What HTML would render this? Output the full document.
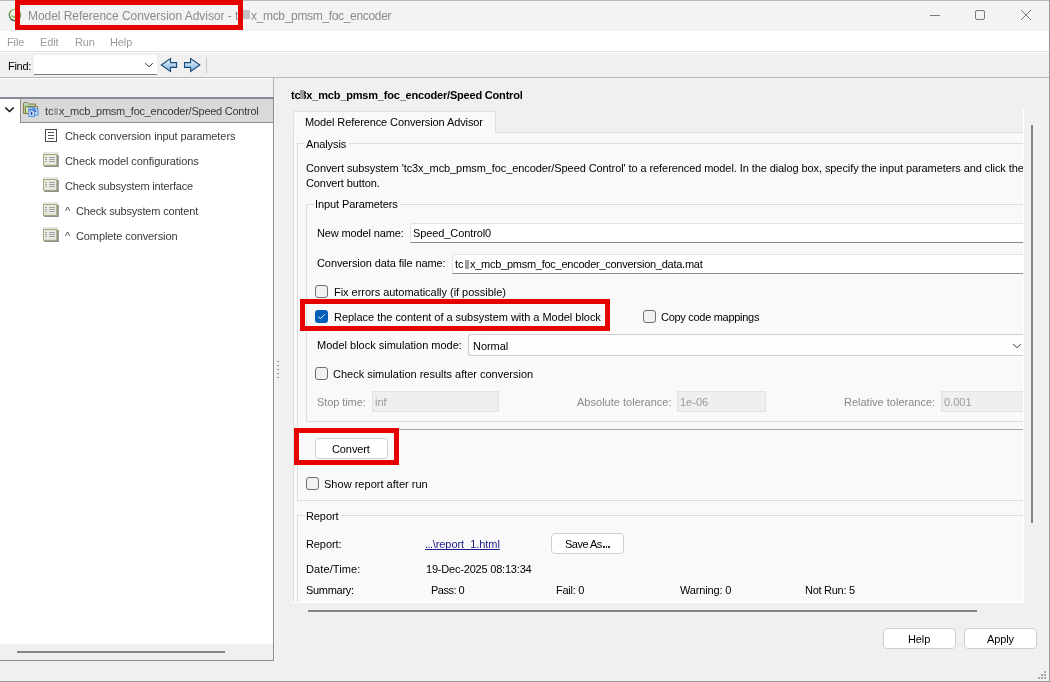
<!DOCTYPE html>
<html><head><meta charset="utf-8"><style>
html,body{margin:0;padding:0;}
body{width:1050px;height:682px;position:relative;overflow:hidden;background:#f0f0f0;font-family:"Liberation Sans",sans-serif;}
.t{position:absolute;white-space:pre;will-change:transform;font-family:"Liberation Sans",sans-serif;}
.r{position:absolute;}
</style></head><body>
<div class="r" style="left:0px;top:0px;width:1050px;height:31px;background:#f3f3f3;"></div>
<div class="r" style="left:0px;top:0px;width:1050px;height:1px;background:#b9b9b9;"></div>
<svg class="r" style="left:8px;top:8px" width="14" height="14" viewBox="0 0 14 14"><defs><linearGradient id="gr" x1="0.7" y1="0" x2="0.2" y2="1"><stop offset="0" stop-color="#9ccf6a"/><stop offset="1" stop-color="#355e30"/></linearGradient></defs><circle cx="7" cy="7" r="5.7" fill="#f6f8f3" stroke="url(#gr)" stroke-width="1.3"/><path d="M3.6 7.6 L6.8 9.6" stroke="#76bf45" stroke-width="1.8"/></svg>
<div class="t" style="left:28px;top:10.00px;font-size:12px;line-height:12px;color:#8b8b8b;font-weight:normal;letter-spacing:-0.05px;">Model Reference Conversion Advisor - t</div>
<div class="t" style="left:250.5px;top:10.00px;font-size:12px;line-height:12px;color:#8b8b8b;font-weight:normal;letter-spacing:-0.33px;">x_mcb_pmsm_foc_encoder</div>
<div class="r" style="left:243px;top:10px;width:7px;height:9px;background:#c4c4c4;"></div>
<svg class="r" style="left:925px;top:5px" width="115" height="22" viewBox="0 0 115 22"><path d="M5 10.5 H15" stroke="#7a7a7a" stroke-width="1"/><rect x="50.5" y="5.5" width="9" height="9" rx="1.5" fill="none" stroke="#7a7a7a" stroke-width="1"/><path d="M96 5 L106 15 M106 5 L96 15" stroke="#7a7a7a" stroke-width="1"/></svg>
<div class="r" style="left:0px;top:31px;width:1050px;height:21px;background:#ffffff;"></div>
<div class="r" style="left:0px;top:51px;width:1050px;height:1px;background:#e6e6e6;"></div>
<div class="t" style="left:7px;top:37.00px;font-size:11px;line-height:11px;color:#9b9b9b;font-weight:normal;letter-spacing:-0.1px;">File</div>
<div class="t" style="left:40px;top:37.00px;font-size:11px;line-height:11px;color:#9b9b9b;font-weight:normal;letter-spacing:-0.1px;">Edit</div>
<div class="t" style="left:75px;top:37.00px;font-size:11px;line-height:11px;color:#9b9b9b;font-weight:normal;letter-spacing:-0.1px;">Run</div>
<div class="t" style="left:110px;top:37.00px;font-size:11px;line-height:11px;color:#9b9b9b;font-weight:normal;letter-spacing:-0.1px;">Help</div>
<div class="r" style="left:0px;top:52px;width:1050px;height:26px;background:#f0f0f0;"></div>
<div class="r" style="left:0px;top:52px;width:1050px;height:1px;background:#ffffff;"></div>
<div class="r" style="left:0px;top:77px;width:1050px;height:1px;background:#b8b8b8;"></div>
<div class="t" style="left:8px;top:61.00px;font-size:11px;line-height:11px;color:#000;font-weight:normal;letter-spacing:-0.3px;">Find:</div>
<div class="r" style="left:34px;top:55px;width:123px;height:20px;background:#fff;border-bottom:1px solid #7d7d7d;border-radius:2px 2px 0 0;box-sizing:border-box;"></div>
<svg class="r" style="left:144px;top:60px" width="11" height="8" viewBox="0 0 11 8"><path d="M1.2 3.3 L5 6.6 L8.8 3.3" fill="none" stroke="#3e3e3e" stroke-width="1"/></svg>
<svg class="r" style="left:160px;top:57px" width="42" height="17" viewBox="0 0 42 17"><defs><linearGradient id="ga" x1="0" y1="0" x2="0" y2="1"><stop offset="0" stop-color="#eef7fd"/><stop offset="1" stop-color="#7ab0de"/></linearGradient></defs><path d="M1.3 8 L10.5 1.5 V5.6 H16.6 V10.4 H10.5 V14.5 Z" fill="url(#ga)" stroke="#1b4a78" stroke-width="1.1" stroke-linejoin="miter"/><path d="M39.8 8 L30.6 1.5 V5.6 H24.5 V10.4 H30.6 V14.5 Z" fill="url(#ga)" stroke="#1b4a78" stroke-width="1.1" stroke-linejoin="miter"/></svg>
<div class="r" style="left:206px;top:57px;width:1px;height:16px;background:#c8c8c8;"></div>
<div class="r" style="left:0px;top:78px;width:1050px;height:604px;background:#f0f0f0;"></div>
<div class="r" style="left:0px;top:78px;width:273px;height:1px;background:#ffffff;"></div>
<div class="r" style="left:273px;top:78px;width:1px;height:19px;background:#b2b2b2;"></div>
<div class="r" style="left:0px;top:97px;width:274px;height:564px;background:#fff;border-top:2px solid #868c95;border-right:1px solid #868c95;border-bottom:1px solid #868c95;box-sizing:border-box;"></div>
<div class="r" style="left:274px;top:97px;width:1px;height:564px;background:#f8f8f8;"></div>
<div class="r" style="left:277px;top:360.6px;width:2px;height:1.3px;background:#969696;"></div>
<div class="r" style="left:277px;top:364.6px;width:2px;height:1.3px;background:#969696;"></div>
<div class="r" style="left:277px;top:368.6px;width:2px;height:1.3px;background:#969696;"></div>
<div class="r" style="left:277px;top:372.6px;width:2px;height:1.3px;background:#969696;"></div>
<div class="r" style="left:277px;top:376.6px;width:2px;height:1.3px;background:#969696;"></div>
<div class="r" style="left:0px;top:644px;width:273px;height:16px;background:#f0f0f0;"></div>
<div class="r" style="left:17px;top:651px;width:208px;height:2px;background:#858585;"></div>
<div class="r" style="left:20px;top:99px;width:253px;height:24px;background:#d9d9d9;border-left:1px solid #8f8f8f;border-bottom:1px solid #8f8f8f;box-sizing:border-box;"></div>
<svg class="r" style="left:3px;top:104px" width="13" height="10" viewBox="0 0 13 10"><path d="M2.3 3.5 L6.5 7.5 L10.7 3.5" fill="none" stroke="#111" stroke-width="1.6"/></svg>
<svg class="r" style="left:20px;top:99px" width="22" height="22" viewBox="0 0 22 22"><path d="M3.5 4.5 Q3.5 3.5 4.5 3.5 H7.5 L8.5 5 H15.5 V14.5 H3.5 Z" fill="#b3d29a" stroke="#877c45" stroke-width="1"/><rect x="4.3" y="4.3" width="3.5" height="1.2" fill="#bfe0f6"/><path d="M5.5 7.5 H17.5 V14.5 H5.5 Z" fill="#cde4b2" stroke="#877c45" stroke-width="1"/><rect x="6.2" y="8.2" width="10.6" height="1.1" fill="#bfe0f6"/><rect x="12" y="9.5" width="6.5" height="7" fill="#5a96e2"/><rect x="13" y="10.5" width="4.3" height="4.8" fill="#cfe5fb"/><rect x="8.3" y="8.3" width="6.8" height="9.5" fill="#4a88de"/><rect x="9.3" y="9.3" width="3" height="2.2" fill="#cfe5fb"/><rect x="9.3" y="12.3" width="4.8" height="4.5" fill="#cfe5fb"/><rect x="10" y="10" width="1.3" height="1.2" fill="#0b2590"/><rect x="10.9" y="13.2" width="1.4" height="2.6" fill="#0b2590"/><rect x="14.8" y="11.6" width="1.3" height="1.3" fill="#0b2590"/></svg>
<div class="t" style="left:45px;top:106.00px;font-size:11px;line-height:11px;color:#3a3a3a;font-weight:normal;letter-spacing:-0.1px;">tc</div>
<div class="t" style="left:59.3px;top:106.00px;font-size:11px;line-height:11px;color:#3a3a3a;font-weight:normal;letter-spacing:-0.25px;">x_mcb_pmsm_foc_encoder/Speed Control</div>
<div class="r" style="left:54px;top:108px;width:4px;height:7px;background:#a9a9a9;"></div>
<div class="r" style="left:45px;top:129px;width:12px;height:13px;background:#fff;border:1px solid #4a4a4a;box-sizing:border-box;"></div>
<div class="r" style="left:48px;top:132px;width:6px;height:1.2px;background:#555;"></div>
<div class="r" style="left:48px;top:135px;width:6px;height:1.2px;background:#555;"></div>
<div class="r" style="left:48px;top:138px;width:6px;height:1.2px;background:#555;"></div>
<div class="t" style="left:65px;top:131.00px;font-size:11px;line-height:11px;color:#3a3a3a;font-weight:normal;letter-spacing:-0.08px;">Check conversion input parameters</div>
<svg class="r" style="left:43px;top:152px" width="17" height="16" viewBox="0 0 17 16"><rect x="0" y="0.2" width="15.8" height="1.6" fill="#e2e2e2"/><rect x="1.3" y="3" width="14.5" height="12" fill="#8c8c8c"/><rect x="0.5" y="2.5" width="13.3" height="10.8" fill="#eaeae2" stroke="#a3aa7a" stroke-width="1"/><path d="M2.1 5.5 H4 M2.1 7.5 H4 M2.1 9.5 H4 M6.1 5.5 H11.8 M6.1 7.5 H11.8 M6.1 9.5 H11.8" stroke="#9e9e9e" stroke-width="1"/></svg>
<div class="t" style="left:65px;top:156.00px;font-size:11px;line-height:11px;color:#3a3a3a;font-weight:normal;letter-spacing:-0.08px;">Check model configurations</div>
<svg class="r" style="left:43px;top:177px" width="17" height="16" viewBox="0 0 17 16"><rect x="0" y="0.2" width="15.8" height="1.6" fill="#e2e2e2"/><rect x="1.3" y="3" width="14.5" height="12" fill="#8c8c8c"/><rect x="0.5" y="2.5" width="13.3" height="10.8" fill="#eaeae2" stroke="#a3aa7a" stroke-width="1"/><path d="M2.1 5.5 H4 M2.1 7.5 H4 M2.1 9.5 H4 M6.1 5.5 H11.8 M6.1 7.5 H11.8 M6.1 9.5 H11.8" stroke="#9e9e9e" stroke-width="1"/></svg>
<div class="t" style="left:65px;top:181.00px;font-size:11px;line-height:11px;color:#3a3a3a;font-weight:normal;letter-spacing:-0.16px;">Check subsystem interface</div>
<svg class="r" style="left:43px;top:202px" width="17" height="16" viewBox="0 0 17 16"><rect x="0" y="0.2" width="15.8" height="1.6" fill="#e2e2e2"/><rect x="1.3" y="3" width="14.5" height="12" fill="#8c8c8c"/><rect x="0.5" y="2.5" width="13.3" height="10.8" fill="#eaeae2" stroke="#a3aa7a" stroke-width="1"/><path d="M2.1 5.5 H4 M2.1 7.5 H4 M2.1 9.5 H4 M6.1 5.5 H11.8 M6.1 7.5 H11.8 M6.1 9.5 H11.8" stroke="#9e9e9e" stroke-width="1"/></svg>
<div class="t" style="left:65px;top:206.00px;font-size:11px;line-height:11px;color:#3a3a3a;font-weight:normal;">^</div>
<div class="t" style="left:76px;top:206.00px;font-size:11px;line-height:11px;color:#3a3a3a;font-weight:normal;letter-spacing:-0.17px;">Check subsystem content</div>
<svg class="r" style="left:43px;top:227px" width="17" height="16" viewBox="0 0 17 16"><rect x="0" y="0.2" width="15.8" height="1.6" fill="#e2e2e2"/><rect x="1.3" y="3" width="14.5" height="12" fill="#8c8c8c"/><rect x="0.5" y="2.5" width="13.3" height="10.8" fill="#eaeae2" stroke="#a3aa7a" stroke-width="1"/><path d="M2.1 5.5 H4 M2.1 7.5 H4 M2.1 9.5 H4 M6.1 5.5 H11.8 M6.1 7.5 H11.8 M6.1 9.5 H11.8" stroke="#9e9e9e" stroke-width="1"/></svg>
<div class="t" style="left:65px;top:231.00px;font-size:11px;line-height:11px;color:#3a3a3a;font-weight:normal;">^</div>
<div class="t" style="left:76px;top:231.00px;font-size:11px;line-height:11px;color:#3a3a3a;font-weight:normal;letter-spacing:-0.1px;">Complete conversion</div>
<div class="r" style="left:0;top:0;width:1023px;height:602px;overflow:hidden;">
<div class="t" style="left:291px;top:90.00px;font-size:11px;line-height:11px;color:#000;font-weight:bold;letter-spacing:-0.19px;">tc3x_mcb_pmsm_foc_encoder/Speed Control</div>
<div class="r" style="left:300px;top:90px;width:4px;height:9px;background:#9c9c9c;"></div>
<div class="r" style="left:293px;top:132px;width:731px;height:471px;background:#f9f9f9;border-left:1px solid #dcdcdc;box-sizing:border-box;"></div>
<div class="r" style="left:495px;top:132px;width:529px;height:1px;background:#dcdcdc;"></div>
<div class="r" style="left:293px;top:111px;width:203px;height:22px;background:#f9f9f9;border:1px solid #e0e0e0;border-bottom:none;box-sizing:border-box;"></div>
<div class="t" style="left:305px;top:117.00px;font-size:11px;line-height:11px;color:#000;font-weight:normal;letter-spacing:-0.11px;">Model Reference Conversion Advisor</div>
<div class="r" style="left:297px;top:143px;width:727px;height:358px;border:1px solid #dcdcdc;border-right:none;box-sizing:border-box;"></div>
<div class="r" style="left:305px;top:138px;width:44px;height:10px;background:#f9f9f9;"></div>
<div class="t" style="left:306px;top:139.00px;font-size:11px;line-height:11px;color:#000;font-weight:normal;letter-spacing:-0.1px;">Analysis</div>
<div class="t" style="left:306px;top:163.00px;font-size:11px;line-height:11px;color:#000;font-weight:normal;letter-spacing:-0.085px;">Convert subsystem 'tc3x_mcb_pmsm_foc_encoder/Speed Control' to a referenced model. In the dialog box, specify the input parameters and click the</div>
<div class="t" style="left:306px;top:178.00px;font-size:11px;line-height:11px;color:#000;font-weight:normal;letter-spacing:-0.1px;">Convert button.</div>
<div class="r" style="left:306px;top:204px;width:718px;height:218px;border:1px solid #dcdcdc;border-right:none;box-sizing:border-box;"></div>
<div class="r" style="left:314px;top:198px;width:86px;height:12px;background:#f9f9f9;"></div>
<div class="t" style="left:315px;top:199.00px;font-size:11px;line-height:11px;color:#000;font-weight:normal;letter-spacing:-0.1px;">Input Parameters</div>
<div class="t" style="left:317px;top:228.00px;font-size:11px;line-height:11px;color:#000;font-weight:normal;letter-spacing:-0.13px;">New model name:</div>
<div class="r" style="left:410px;top:223px;width:614px;height:20px;background:#fff;border-top:1px solid #e3e3e3;border-left:1px solid #e3e3e3;border-bottom:1px solid #8a8a8a;box-sizing:border-box;border-radius:2px 0 0 0;"></div>
<div class="t" style="left:413px;top:228.00px;font-size:11px;line-height:11px;color:#000;font-weight:normal;letter-spacing:-0.1px;">Speed_Control0</div>
<div class="t" style="left:317px;top:258.00px;font-size:11px;line-height:11px;color:#000;font-weight:normal;letter-spacing:-0.09px;">Conversion data file name:</div>
<div class="r" style="left:452px;top:254px;width:572px;height:20px;background:#fff;border-top:1px solid #e3e3e3;border-left:1px solid #e3e3e3;border-bottom:1px solid #8a8a8a;box-sizing:border-box;border-radius:2px 0 0 0;"></div>
<div class="t" style="left:455px;top:259.00px;font-size:11px;line-height:11px;color:#000;font-weight:normal;letter-spacing:-0.1px;">tc</div>
<div class="t" style="left:469.5px;top:259.00px;font-size:11px;line-height:11px;color:#000;font-weight:normal;letter-spacing:-0.26px;">x_mcb_pmsm_foc_encoder_conversion_data.mat</div>
<div class="r" style="left:465px;top:260px;width:4px;height:9px;background:#a0a0a0;"></div>
<svg class="r" style="left:315px;top:285px" width="13" height="13" viewBox="0 0 13 13"><rect x="0.5" y="0.5" width="12" height="12" rx="2.5" fill="#f2f2f2" stroke="#6e6e6e" stroke-width="1"/></svg>
<div class="t" style="left:333.5px;top:287.00px;font-size:11px;line-height:11px;color:#000;font-weight:normal;letter-spacing:-0.03px;">Fix errors automatically (if possible)</div>
<svg class="r" style="left:315px;top:310px" width="13" height="13" viewBox="0 0 13 13"><rect x="0" y="0" width="13" height="13" rx="3" fill="#005fb8"/><path d="M3.2 6.6 L5.4 8.8 L9.8 4.3" fill="none" stroke="#fff" stroke-width="1"/></svg>
<div class="t" style="left:333.5px;top:312.00px;font-size:11px;line-height:11px;color:#000;font-weight:normal;letter-spacing:-0.03px;">Replace the content of a subsystem with a Model block</div>
<svg class="r" style="left:643px;top:310px" width="13" height="13" viewBox="0 0 13 13"><rect x="0.5" y="0.5" width="12" height="12" rx="2.5" fill="#f2f2f2" stroke="#6e6e6e" stroke-width="1"/></svg>
<div class="t" style="left:661px;top:312.00px;font-size:11px;line-height:11px;color:#000;font-weight:normal;letter-spacing:-0.29px;">Copy code mappings</div>
<div class="t" style="left:317px;top:340.00px;font-size:11px;line-height:11px;color:#000;font-weight:normal;letter-spacing:0.0px;">Model block simulation mode:</div>
<div class="r" style="left:468px;top:334px;width:556px;height:22px;background:#fdfdfd;border:1px solid #cdcdcd;border-right:none;box-sizing:border-box;border-radius:3px 0 0 3px;"></div>
<div class="t" style="left:473px;top:341.00px;font-size:11px;line-height:11px;color:#000;font-weight:normal;letter-spacing:-0.05px;">Normal</div>
<svg class="r" style="left:1011px;top:341px" width="12" height="9" viewBox="0 0 12 9"><path d="M2 3.1 L6 6.6 L9.9 3.1" fill="none" stroke="#3e3e3e" stroke-width="1"/></svg>
<svg class="r" style="left:315px;top:367px" width="13" height="13" viewBox="0 0 13 13"><rect x="0.5" y="0.5" width="12" height="12" rx="2.5" fill="#f2f2f2" stroke="#6e6e6e" stroke-width="1"/></svg>
<div class="t" style="left:333px;top:369.00px;font-size:11px;line-height:11px;color:#000;font-weight:normal;letter-spacing:-0.01px;">Check simulation results after conversion</div>
<div class="t" style="left:317px;top:397.00px;font-size:11px;line-height:11px;color:#8a8a8a;font-weight:normal;letter-spacing:-0.08px;">Stop time:</div>
<div class="r" style="left:372px;top:391px;width:127px;height:21px;background:#efefef;border:1px solid #e2e2e2;box-sizing:border-box;"></div>
<div class="t" style="left:375px;top:397.00px;font-size:11px;line-height:11px;color:#9a9a9a;font-weight:normal;letter-spacing:0px;">inf</div>
<div class="t" style="left:577px;top:397.00px;font-size:11px;line-height:11px;color:#8a8a8a;font-weight:normal;letter-spacing:0.02px;">Absolute tolerance:</div>
<div class="r" style="left:677px;top:391px;width:89px;height:21px;background:#efefef;border:1px solid #e2e2e2;box-sizing:border-box;"></div>
<div class="t" style="left:680px;top:397.00px;font-size:11px;line-height:11px;color:#9a9a9a;font-weight:normal;letter-spacing:0px;">1e-06</div>
<div class="t" style="left:844px;top:397.00px;font-size:11px;line-height:11px;color:#8a8a8a;font-weight:normal;letter-spacing:0.0px;">Relative tolerance:</div>
<div class="r" style="left:941px;top:391px;width:84px;height:21px;background:#efefef;border:1px solid #e2e2e2;border-right:none;box-sizing:border-box;"></div>
<div class="t" style="left:944px;top:397.00px;font-size:11px;line-height:11px;color:#9a9a9a;font-weight:normal;letter-spacing:0px;">0.001</div>
<div class="r" style="left:297px;top:429px;width:727px;height:1px;background:#a6a6a6;"></div>
<div class="r" style="left:315px;top:438px;width:73px;height:21px;background:#fff;border:1px solid #cfcfcf;border-radius:4px;box-sizing:border-box;"></div>
<div class="t" style="left:332px;top:444.00px;font-size:11px;line-height:11px;color:#000;font-weight:normal;letter-spacing:-0.1px;">Convert</div>
<svg class="r" style="left:306px;top:477px" width="13" height="13" viewBox="0 0 13 13"><rect x="0.5" y="0.5" width="12" height="12" rx="2.5" fill="#f2f2f2" stroke="#6e6e6e" stroke-width="1"/></svg>
<div class="t" style="left:324px;top:479.00px;font-size:11px;line-height:11px;color:#000;font-weight:normal;letter-spacing:0.02px;">Show report after run</div>
<div class="r" style="left:297px;top:515px;width:727px;height:100px;border:1px solid #dcdcdc;border-right:none;border-bottom:none;box-sizing:border-box;"></div>
<div class="r" style="left:305px;top:509px;width:36px;height:12px;background:#f9f9f9;"></div>
<div class="t" style="left:306px;top:511.00px;font-size:11px;line-height:11px;color:#000;font-weight:normal;letter-spacing:-0.1px;">Report</div>
<div class="t" style="left:306px;top:539.00px;font-size:11px;line-height:11px;color:#000;font-weight:normal;letter-spacing:-0.1px;">Report:</div>
<div class="t" style="left:425px;top:539.00px;font-size:11px;line-height:11px;color:#1c1c8e;font-weight:normal;letter-spacing:-0.05px;"><u style="text-decoration-skip-ink:none"><span style="letter-spacing:-0.5px">...</span>\report_1.html</u></div>
<div class="r" style="left:551px;top:533px;width:73px;height:21px;background:#fff;border:1px solid #cfcfcf;border-radius:4px;box-sizing:border-box;"></div>
<div class="t" style="left:565px;top:539.00px;font-size:11px;line-height:11px;color:#000;font-weight:normal;letter-spacing:-0.5px;">Save As</div>
<div class="r" style="left:603.4px;top:546px;width:1.3px;height:2px;background:#333;"></div>
<div class="r" style="left:605.9px;top:546px;width:1.3px;height:2px;background:#333;"></div>
<div class="r" style="left:608.4px;top:546px;width:1.3px;height:2px;background:#333;"></div>
<div class="t" style="left:306px;top:564.00px;font-size:11px;line-height:11px;color:#000;font-weight:normal;letter-spacing:0.1px;">Date/Time:</div>
<div class="t" style="left:425.5px;top:564.00px;font-size:11px;line-height:11px;color:#000;font-weight:normal;letter-spacing:-0.2px;">19-Dec-2025 08:13:34</div>
<div class="t" style="left:306px;top:585.00px;font-size:11px;line-height:11px;color:#000;font-weight:normal;letter-spacing:-0.3px;">Summary:</div>
<div class="t" style="left:431px;top:585.00px;font-size:11px;line-height:11px;color:#000;font-weight:normal;letter-spacing:-0.5px;">Pass: 0</div>
<div class="t" style="left:556px;top:585.00px;font-size:11px;line-height:11px;color:#000;font-weight:normal;letter-spacing:-0.25px;">Fail: 0</div>
<div class="t" style="left:680px;top:585.00px;font-size:11px;line-height:11px;color:#000;font-weight:normal;letter-spacing:-0.15px;">Warning: 0</div>
<div class="t" style="left:805px;top:585.00px;font-size:11px;line-height:11px;color:#000;font-weight:normal;letter-spacing:-0.27px;">Not Run: 5</div>
</div>
<div class="r" style="left:1023px;top:108px;width:1px;height:495px;background:#ffffff;"></div>
<div class="r" style="left:1031px;top:125px;width:2px;height:398px;background:#858585;"></div>
<div class="r" style="left:308px;top:610px;width:669px;height:2px;background:#858585;"></div>
<div class="r" style="left:291px;top:602px;width:733px;height:1px;background:#ffffff;"></div>
<div class="r" style="left:883px;top:628px;width:73px;height:21px;background:#fff;border:1px solid #cfcfcf;border-radius:4px;box-sizing:border-box;"></div>
<div class="t" style="left:908px;top:634.00px;font-size:11px;line-height:11px;color:#000;font-weight:normal;letter-spacing:-0.1px;">Help</div>
<div class="r" style="left:964px;top:628px;width:73px;height:21px;background:#fff;border:1px solid #cfcfcf;border-radius:4px;box-sizing:border-box;"></div>
<div class="t" style="left:987px;top:634.00px;font-size:11px;line-height:11px;color:#000;font-weight:normal;letter-spacing:-0.1px;">Apply</div>
<div class="r" style="left:1044px;top:671px;width:2px;height:2px;background:#a8a8a8;"></div>
<div class="r" style="left:1041px;top:674px;width:2px;height:2px;background:#a8a8a8;"></div>
<div class="r" style="left:1044px;top:674px;width:2px;height:2px;background:#a8a8a8;"></div>
<div class="r" style="left:1038px;top:677px;width:2px;height:2px;background:#a8a8a8;"></div>
<div class="r" style="left:1041px;top:677px;width:2px;height:2px;background:#a8a8a8;"></div>
<div class="r" style="left:1044px;top:677px;width:2px;height:2px;background:#a8a8a8;"></div>
<div class="r" style="left:1049px;top:0px;width:1px;height:682px;background:#9a9a9a;"></div>
<div class="r" style="left:0px;top:681px;width:1050px;height:1px;background:#9a9a9a;"></div>
<div class="r" style="left:15px;top:0px;width:228px;height:30px;border:5px solid #e60000;box-sizing:border-box;"></div>
<div class="r" style="left:300px;top:299px;width:310px;height:32px;border:5px solid #e60000;box-sizing:border-box;"></div>
<div class="r" style="left:294px;top:428px;width:105px;height:37px;border:5px solid #e60000;box-sizing:border-box;"></div>
</body></html>
